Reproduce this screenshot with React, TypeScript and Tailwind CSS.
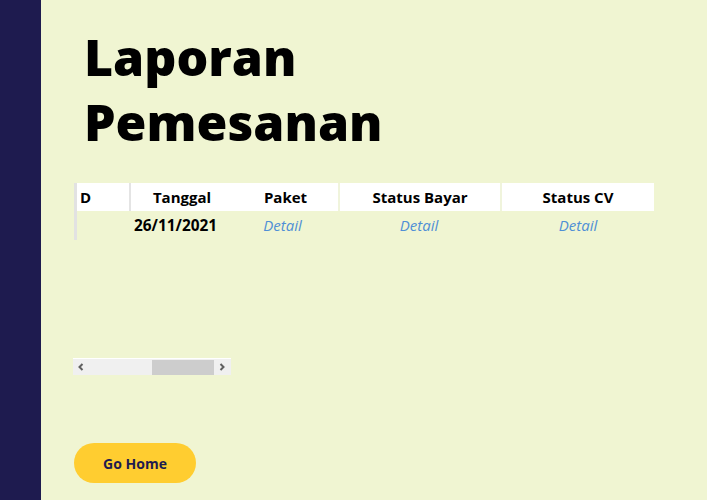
const COLS = [
  { key: 'id', label: 'D', width: 'w-[54px]', head: 'text-left pl-[3px]', sep: 'border-r-2 border-[#e4e4e4]' },
  { key: 'tanggal', label: 'Tanggal', width: 'w-[102px]', head: 'text-center', sep: '' },
  { key: 'paket', label: 'Paket', width: 'w-[107px]', head: 'text-center', sep: 'border-r-2 border-[#f0f4dc]' },
  { key: 'bayar', label: 'Status Bayar', width: 'w-[162px]', head: 'text-center', sep: 'border-r-2 border-[#f0f4dc]' },
  { key: 'cv', label: 'Status CV', width: 'w-[152px]', head: 'text-center', sep: '' },
]

export default function App() {
  return (
    <div className="flex h-[500px] w-full font-['Open_Sans',sans-serif]">
      {/* Sidebar */}
      <aside className="w-[41px] shrink-0 bg-[#1e1b4f]" />

      {/* Main */}
      <main className="flex-1 bg-[#f0f5d2] pl-[33px] pt-[25px]">
        <h1 className="ml-[10px] text-[50px] leading-[65px] font-extrabold text-black">
          Laporan
          <br />
          Pemesanan
        </h1>

        {/* Table */}
        <div className="mt-[28px] h-[175px] w-fit">
          <div className="border-l-[3px] border-[#e2e2e2]">
            <div className="flex h-[28px] items-center bg-white text-[15px] font-bold text-black">
              {COLS.map(c => (
                <div key={c.key} className={`${c.width} ${c.head} ${c.sep} h-full leading-[28px]`}>
                  {c.label}
                </div>
              ))}
            </div>
            <div className="flex h-[29px] items-center text-[15px]">
              <div className="w-[54px]" />
              <div className="w-[102px] pl-[3px] text-[15.4px] font-bold text-black">26/11/2021</div>
              <div className="w-[107px] pr-[8px] text-center italic text-[#4f8fd6]">Detail</div>
              <div className="w-[162px] pr-[4px] text-center italic text-[#4f8fd6]">Detail</div>
              <div className="w-[152px] text-center italic text-[#4f8fd6]">Detail</div>
            </div>
          </div>
        </div>

        {/* Scrollbar */}
        <div className="-ml-px flex h-[17px] w-[158px] items-center border-t border-white bg-[#f0f0f0]">
          <span className="flex w-[16px] justify-center">
            <svg width="8" height="8" viewBox="0 0 8 8"><path d="M5.5 1 L2.5 4 L5.5 7" stroke="#606060" strokeWidth="2" fill="none" /></svg>
          </span>
          <div className="ml-[63px] h-[15px] w-[62px] bg-[#cdcdcd]" />
          <span className="flex w-[16px] justify-center">
            <svg width="8" height="8" viewBox="0 0 8 8"><path d="M2.5 1 L5.5 4 L2.5 7" stroke="#606060" strokeWidth="2" fill="none" /></svg>
          </span>
        </div>

        <button className="mt-[68px] h-[40px] w-[122px] rounded-full bg-[#ffcd30] text-[14px] font-bold text-[#1e1b4f]">
          Go Home
        </button>
      </main>
    </div>
  )
}
